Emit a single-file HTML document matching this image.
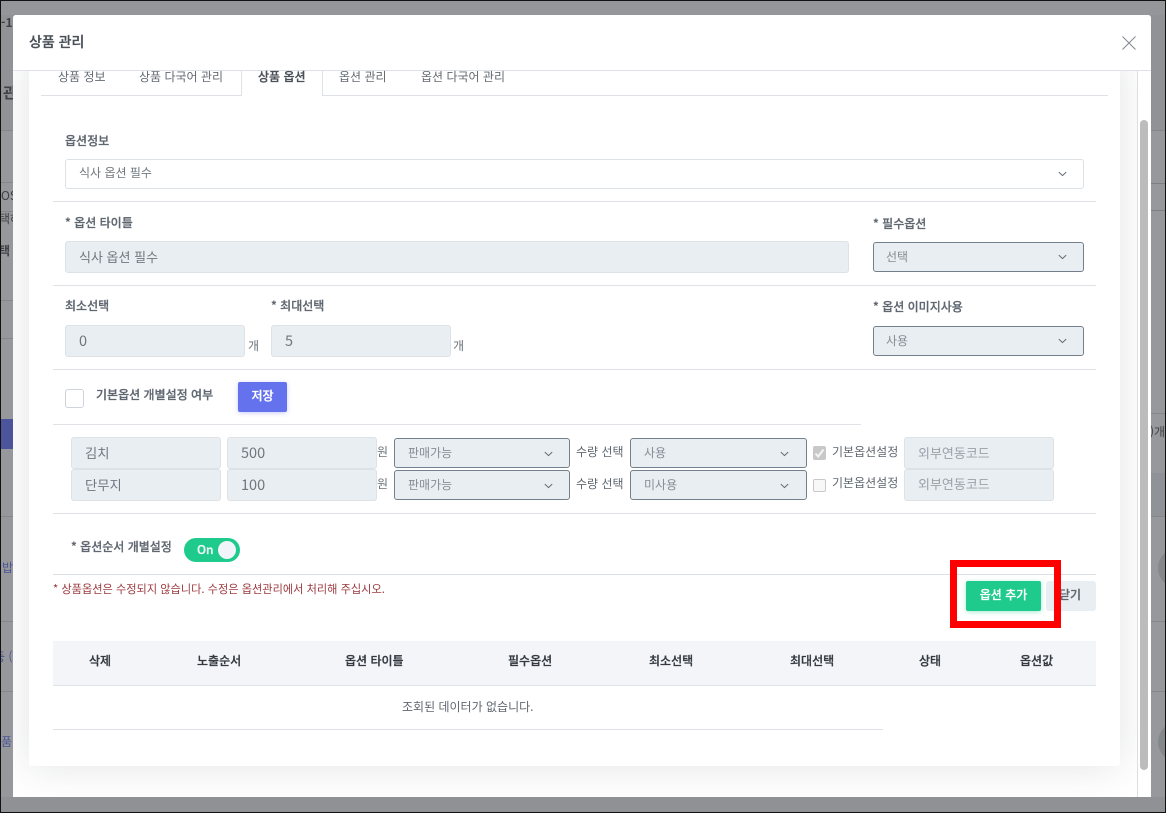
<!DOCTYPE html>
<html lang="ko"><head><meta charset="utf-8"><title>상품 관리</title>
<style>
*{box-sizing:border-box}
html,body{margin:0;padding:0;width:1166px;height:813px;overflow:hidden;background:#929497}
body{position:relative;font-family:"Noto Sans CJK KR","Liberation Sans",sans-serif;font-size:12px;color:#5f6770}
.a{position:absolute}
.t{position:absolute;white-space:nowrap;line-height:18px;height:18px}
.hr{position:absolute;height:1px;background:#dfe2e6}
.box{position:absolute;border-radius:3px;border:1px solid #dde2e6;background:#e9eef2;color:#6f777f;white-space:nowrap;padding-left:13px}
.sel{position:absolute;border-radius:3px;border:1px solid #737f8a;background:#e9eef2;color:#858c94;white-space:nowrap;padding-left:13px}
.chev{position:absolute;width:9px;height:6px}
.num{font-size:14.5px;line-height:30px}
[style*="font-weight:500"]{-webkit-text-stroke:.25px currentColor}
</style></head><body>
<!-- background page fragments -->
<div class="a" style="left:0;top:0;width:1166px;height:813px;background:#96989b"></div>
<div class="a" style="left:0;top:15px;width:1166px;height:115px;background:#909295"></div>
<div class="a" style="left:0;top:0;width:1166px;height:15px;background:#94969a"></div>
<div class="a" style="left:0;top:797px;width:1166px;height:16px;background:#8f9195"></div>
<div class="a" style="left:1151px;top:473px;width:15px;height:43px;background:#8f9297"></div>
<div class="a" style="left:0;top:130px;width:1166px;height:1px;background:#85888b"></div>
<div class="a" style="left:1151px;top:183px;width:15px;height:1px;background:#7d8083"></div>
<div class="a" style="left:1151px;top:210px;width:15px;height:1px;background:#7d8083"></div>
<div class="a" style="left:0;top:182px;width:13px;height:1px;background:#85888b"></div>
<div class="a" style="left:0;top:211px;width:13px;height:1px;background:#85888b"></div>
<div class="a" style="left:0;top:300px;width:13px;height:1px;background:#85888b"></div>
<div class="a" style="left:0;top:338px;width:13px;height:1px;background:#85888b"></div>
<div class="a" style="left:0;top:419px;width:13px;height:30px;background:#4c559c"></div>
<div class="a" style="left:0;top:516px;width:13px;height:1px;background:#85888b"></div>
<div class="a" style="left:0;top:621px;width:13px;height:1px;background:#85888b"></div>
<div class="a" style="left:0;top:691px;width:13px;height:1px;background:#85888b"></div>
<div class="a" style="left:1151px;top:413px;width:15px;height:1px;background:#85888b"></div>
<div class="a" style="left:1151px;top:516px;width:15px;height:1px;background:#85888b"></div>
<div class="a" style="left:1151px;top:621px;width:15px;height:1px;background:#85888b"></div>
<div class="a" style="left:1151px;top:691px;width:15px;height:1px;background:#85888b"></div>
<div class="a" style="left:1158px;top:548px;width:40px;height:40px;border-radius:50%;background:#85888b"></div>
<div class="a" style="left:1158px;top:722px;width:40px;height:40px;border-radius:50%;background:#85888b"></div>
<div class="t" style="left:1px;top:14px;color:#3e4145;font-weight:700">-1</div>
<div class="t" style="left:3px;top:84px;color:#3e4145;font-size:15px;font-weight:700">관</div>
<div class="t" style="left:1px;top:187px;color:#3e4145">OS</div>
<div class="t" style="left:-1px;top:210px;color:#3e4145">택하</div>
<div class="t" style="left:-12px;top:242px;color:#3e4145;font-weight:700">선택</div>
<div class="t" style="left:2px;top:559px;color:#4b5597">밥</div>
<div class="t" style="left:-6px;top:648px;color:#4b5597">등 (</div>
<div class="t" style="left:-10px;top:733px;color:#4b5597">상품</div>
<div class="t" style="left:1150px;top:423px;color:#3e4145">)개</div>

<!-- modal -->
<div class="a" style="left:13px;top:15px;width:1138px;height:782px;background:#fff;border-radius:3px 3px 0 0;overflow:hidden">
  <div class="a" style="left:16px;top:40px;width:1091px;height:711px;background:#fff;border-radius:0 0 3px 3px;box-shadow:0 0 40px rgba(50,60,70,.14)"></div>
  <div class="a" style="left:1124px;top:55px;width:14px;height:727px;background:#fff;border-left:1px solid #dcdee0"></div>
  <div class="a" style="left:1127px;top:105px;width:8px;height:650px;background:#bcbcbc;border-radius:4px"></div>
  <div class="a" style="left:0;top:0;width:1138px;height:56px;background:#fff;border-bottom:1px solid #dee2e6"></div>
</div>
<div class="t" style="left:29px;top:31px;height:22px;line-height:22px;font-size:14px;font-weight:500;color:#4a5058">상품 관리</div>
<svg class="a" style="left:1121px;top:35px" width="16" height="16" viewBox="0 0 16 16"><path d="M1.5 1.5L14.5 14.5M14.5 1.5L1.5 14.5" stroke="#858b91" stroke-width="1.1" fill="none"/></svg>

<!-- tabs -->
<div class="hr" style="left:41px;top:95px;width:1067px;background:#dee2e6"></div>
<div class="a" style="left:241px;top:71px;width:82px;height:25px;background:#fff;border-left:1px solid #dee2e6;border-right:1px solid #dee2e6"></div>
<div class="t" style="left:58px;top:68px;color:#646b73">상품 정보</div>
<div class="t" style="left:139px;top:68px;color:#646b73">상품 다국어 관리</div>
<div class="t" style="left:258px;top:68px;color:#4a5058;font-weight:500">상품 옵션</div>
<div class="t" style="left:339px;top:68px;color:#646b73">옵션 관리</div>
<div class="t" style="left:421px;top:68px;color:#646b73">옵션 다국어 관리</div>

<!-- option info -->
<div class="t" style="left:65px;top:132px;color:#5f6770;font-weight:500">옵션정보</div>
<div class="box" style="left:65px;top:159px;width:1019px;height:30px;background:#fff;line-height:25px;color:#6f777f">식사 옵션 필수</div>
<svg class="chev" style="left:1058px;top:171px" viewBox="0 0 11 7"><path d="M1 1.2L5.5 5.4L10 1.2" stroke="#5f6770" stroke-width="1.2" fill="none"/></svg>
<div class="hr" style="left:53px;top:201px;width:1043px"></div>

<div class="t" style="left:65px;top:214px;color:#5f6770;font-weight:500">* 옵션 타이틀</div>
<div class="box" style="left:65px;top:241px;width:784px;height:32px;font-size:13px;line-height:29px">식사 옵션 필수</div>
<div class="t" style="left:873px;top:215px;color:#5f6770;font-weight:500">* 필수옵션</div>
<div class="sel" style="left:873px;top:242px;width:211px;height:30px;line-height:27px;padding-left:12px">선택</div>
<svg class="chev" style="left:1058px;top:254px" viewBox="0 0 11 7"><path d="M1 1.2L5.5 5.4L10 1.2" stroke="#5f6770" stroke-width="1.2" fill="none"/></svg>
<div class="hr" style="left:53px;top:285px;width:1043px"></div>

<div class="t" style="left:65px;top:297px;color:#5f6770;font-weight:500">최소선택</div>
<div class="box num" style="left:65px;top:325px;width:180px;height:32px">0</div>
<div class="t" style="left:248px;top:337px;color:#6a7179">개</div>
<div class="t" style="left:271px;top:297px;color:#5f6770;font-weight:500">* 최대선택</div>
<div class="box num" style="left:271px;top:325px;width:180px;height:32px">5</div>
<div class="t" style="left:453px;top:337px;color:#6a7179">개</div>
<div class="t" style="left:873px;top:298px;color:#5f6770;font-weight:500">* 옵션 이미지사용</div>
<div class="sel" style="left:873px;top:326px;width:211px;height:30px;line-height:27px;padding-left:12px">사용</div>
<svg class="chev" style="left:1058px;top:338px" viewBox="0 0 11 7"><path d="M1 1.2L5.5 5.4L10 1.2" stroke="#5f6770" stroke-width="1.2" fill="none"/></svg>
<div class="hr" style="left:53px;top:369px;width:1043px"></div>

<div class="a" style="left:65px;top:389px;width:19px;height:19px;border:1px solid #ced4da;border-radius:3px;background:#fff"></div>
<div class="t" style="left:96px;top:386px;color:#5f6770;font-weight:500">기본옵션 개별설정 여부</div>
<div class="a" style="left:238px;top:382px;width:49px;height:30px;background:#6472ee;border-radius:2px;color:#fff;text-align:center;line-height:27px;box-shadow:0 1px 5px rgba(100,114,238,.35);font-weight:500">저장</div>
<div class="hr" style="left:53px;top:424px;width:808px"></div>

<!-- rows -->
<div class="box" style="left:71px;top:437px;width:150px;height:32px;font-size:13.3px;line-height:29px">김치</div>
<div class="box num" style="left:227px;top:437px;width:150px;height:32px">500</div>
<div class="t" style="left:377px;top:443px;color:#6a7179">원</div>
<div class="sel" style="left:394px;top:438px;width:176px;height:30px;line-height:27px">판매가능</div>
<svg class="chev" style="left:544px;top:451px" viewBox="0 0 11 7"><path d="M1 1.2L5.5 5.4L10 1.2" stroke="#5f6770" stroke-width="1.2" fill="none"/></svg>
<div class="t" style="left:576px;top:443px;color:#5f6770">수량 선택</div>
<div class="sel" style="left:630px;top:438px;width:177px;height:30px;line-height:27px">사용</div>
<svg class="chev" style="left:780px;top:451px" viewBox="0 0 11 7"><path d="M1 1.2L5.5 5.4L10 1.2" stroke="#5f6770" stroke-width="1.2" fill="none"/></svg>
<div class="a" style="left:813px;top:446px;width:13px;height:14px;background:#c8c8c8;border-radius:2px"></div>
<svg class="a" style="left:813px;top:446px" width="13" height="14" viewBox="0 0 13 14"><path d="M2.5 7.5L5.2 10.5L10.5 3.5" stroke="#f4f4f4" stroke-width="2" fill="none"/></svg>
<div class="t" style="left:832px;top:443px;color:#5f6770">기본옵션설정</div>
<div class="box" style="left:904px;top:437px;width:150px;height:32px;line-height:29px;color:#9aa1a8;font-size:13px">외부연동코드</div>

<div class="box" style="left:71px;top:469px;width:150px;height:32px;font-size:13.3px;line-height:29px">단무지</div>
<div class="box num" style="left:227px;top:469px;width:150px;height:32px">100</div>
<div class="t" style="left:377px;top:475px;color:#6a7179">원</div>
<div class="sel" style="left:394px;top:470px;width:176px;height:30px;line-height:27px">판매가능</div>
<svg class="chev" style="left:544px;top:483px" viewBox="0 0 11 7"><path d="M1 1.2L5.5 5.4L10 1.2" stroke="#5f6770" stroke-width="1.2" fill="none"/></svg>
<div class="t" style="left:576px;top:475px;color:#5f6770">수량 선택</div>
<div class="sel" style="left:630px;top:470px;width:177px;height:30px;line-height:27px">미사용</div>
<svg class="chev" style="left:780px;top:483px" viewBox="0 0 11 7"><path d="M1 1.2L5.5 5.4L10 1.2" stroke="#5f6770" stroke-width="1.2" fill="none"/></svg>
<div class="a" style="left:813px;top:479px;width:13px;height:13px;background:#f8f8f8;border:1px solid #c9c9c9;border-radius:2px"></div>
<div class="t" style="left:832px;top:474px;color:#5f6770">기본옵션설정</div>
<div class="box" style="left:904px;top:469px;width:150px;height:32px;line-height:28px;color:#9aa1a8;font-size:13px">외부연동코드</div>
<div class="hr" style="left:53px;top:513px;width:1043px"></div>

<!-- toggle -->
<div class="t" style="left:71px;top:538px;color:#5f6770;font-weight:500">* 옵션순서 개별설정</div>
<div class="a" style="left:184px;top:538px;width:56px;height:24px;border-radius:12px;background:#1fcb8c"></div>
<div class="t" style="left:197px;top:541px;color:#f5f7fa;font-weight:500">On</div>
<div class="a" style="left:218px;top:541px;width:18px;height:18px;border-radius:50%;background:#f1f4f8"></div>
<div class="hr" style="left:53px;top:574px;width:1043px;background:#dbe0e4"></div>

<div class="t" style="left:53px;top:580px;color:#9c3a3f;font-size:11.2px">* 상품옵션은 수정되지 않습니다. 수정은 옵션관리에서 처리해 주십시오.</div>

<!-- buttons -->
<div class="a" style="left:1046px;top:581px;width:50px;height:30px;background:#e9eef2;border-radius:3px"></div>
<div class="t" style="left:1059px;top:586px;color:#5f6770;font-weight:500">닫기</div>
<div class="a" style="left:966px;top:581px;width:75px;height:30px;background:#1fcb8c;border-radius:2px;color:#fff;text-align:center;line-height:27px;box-shadow:0 1px 5px rgba(31,203,140,.4);font-weight:500">옵션 추가</div>
<div class="a" style="left:950px;top:560px;width:111px;height:68px;border:7px solid #ff0000"></div>

<!-- table -->
<div class="a" style="left:53px;top:641px;width:1043px;height:45px;background:#f3f5f9;border-bottom:1px solid #dfe2e6"></div>
<div class="t" style="left:89px;top:652px;color:#343a40;font-weight:500">삭제</div>
<div class="t" style="left:197px;top:652px;color:#343a40;font-weight:500">노출순서</div>
<div class="t" style="left:345px;top:652px;color:#343a40;font-weight:500">옵션 타이틀</div>
<div class="t" style="left:508px;top:652px;color:#343a40;font-weight:500">필수옵션</div>
<div class="t" style="left:649px;top:652px;color:#343a40;font-weight:500">최소선택</div>
<div class="t" style="left:790px;top:652px;color:#343a40;font-weight:500">최대선택</div>
<div class="t" style="left:919px;top:652px;color:#343a40;font-weight:500">상태</div>
<div class="t" style="left:1020px;top:652px;color:#343a40;font-weight:500">옵션값</div>
<div class="t" style="left:402px;top:698px;color:#5f6770">조회된 데이터가 없습니다.</div>
<div class="hr" style="left:53px;top:729px;width:830px"></div>

<!-- screenshot frame -->
<div class="a" style="left:0;top:0;width:1166px;height:1px;background:#111"></div>
<div class="a" style="left:0;top:812px;width:1166px;height:1px;background:#111"></div>
<div class="a" style="left:0;top:0;width:1px;height:813px;background:#111"></div>
<div class="a" style="left:1165px;top:0;width:1px;height:813px;background:#111"></div>
</body></html>
